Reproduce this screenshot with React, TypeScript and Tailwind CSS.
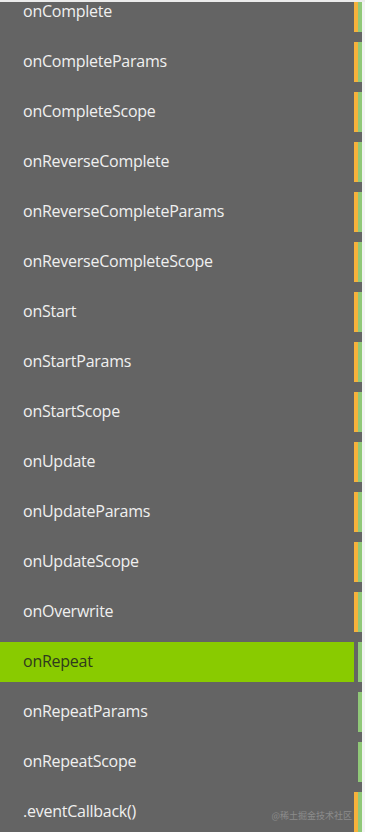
import React from "react";

type Row = { label: string; kind: "both" | "active" | "green" };

const rows: Row[] = [
  { label: "onComplete", kind: "both" },
  { label: "onCompleteParams", kind: "both" },
  { label: "onCompleteScope", kind: "both" },
  { label: "onReverseComplete", kind: "both" },
  { label: "onReverseCompleteParams", kind: "both" },
  { label: "onReverseCompleteScope", kind: "both" },
  { label: "onStart", kind: "both" },
  { label: "onStartParams", kind: "both" },
  { label: "onStartScope", kind: "both" },
  { label: "onUpdate", kind: "both" },
  { label: "onUpdateParams", kind: "both" },
  { label: "onUpdateScope", kind: "both" },
  { label: "onOverwrite", kind: "both" },
  { label: "onRepeat", kind: "active" },
  { label: "onRepeatParams", kind: "green" },
  { label: "onRepeatScope", kind: "green" },
  { label: ".eventCallback()", kind: "both" },
];

export default function App() {
  return (
    <div
      className="relative flex h-[832px] w-[365px] overflow-hidden bg-[#646464]"
      style={{ fontFamily: '"Open Sans", "Noto Sans", sans-serif' }}
    >
      <div className="flex flex-1 flex-col">
        <div className="-mt-[8px] flex flex-col gap-[10px]">
          {rows.map((r) => (
            <div key={r.label} className="flex h-[40px] shrink-0">
              <div
                className={
                  r.kind === "active"
                    ? "flex w-[354px] items-center bg-[#89cb00] pb-[3px] pl-[23px] text-[16px] font-medium tracking-[-0.25px] text-[#2f3a1d]"
                    : "flex w-[354px] items-center pb-[3px] pl-[23px] text-[16px] font-medium tracking-[-0.25px] text-[#f0f0f0]"
                }
              >
                {r.label}
              </div>
              <div
                className={
                  r.kind === "both" ? "w-[4px] bg-[#f6b23c]" : "w-[4px]"
                }
              />
              <div className="w-[4px] bg-[#90c878]" />
            </div>
          ))}
        </div>
      </div>
      <div className="w-[3px] bg-[#f4f4f4]" />
      <div className="absolute left-0 right-0 top-0 h-[2px] bg-[#ececec]" />
      <div
        className="absolute right-[13px] top-[809px] text-[9px] text-[#8c8c8c]"
        style={{ fontFamily: '"Noto Sans CJK SC", sans-serif' }}
      >
        @稀土掘金技术社区
      </div>
    </div>
  );
}
